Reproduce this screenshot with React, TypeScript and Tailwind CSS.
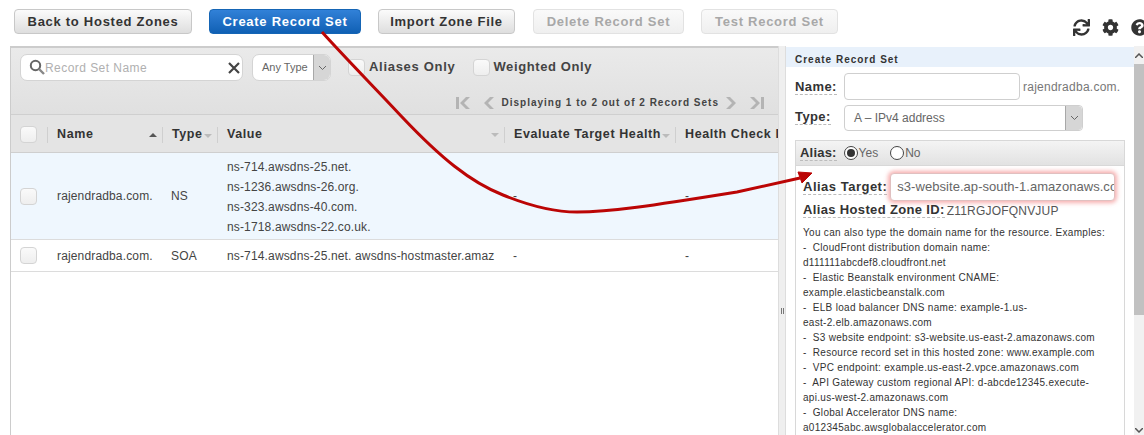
import React from 'react';
import { FaSync, FaCog, FaQuestionCircle } from 'react-icons/fa';

const Btn: React.FC<{ label: string; width: string; kind?: 'primary' | 'disabled' | 'normal' }> = ({ label, width, kind = 'normal' }) => {
    const skin =
        kind === 'primary'
            ? 'bg-gradient-to-b from-[#3181d8] to-[#0f60b4] border-[#1565b5] text-white'
            : kind === 'disabled'
                ? 'bg-gradient-to-b from-[#fafafa] to-[#efefef] border-[#e2e2e2] text-[#a8a8a8]'
                : 'bg-gradient-to-b from-[#fbfbfb] to-[#dedede] border-[#c8c8c8] text-[#333]';
    return (
        <div className={`${width} shrink-0 h-[25px] rounded-[4px] border flex items-center justify-center text-[13px] font-bold tracking-[0.72px] ${skin}`}>
            {label}
        </div>
    );
};

const Check: React.FC<{ className?: string }> = ({ className = '' }) => (
    <div className={`w-[17px] h-[17px] shrink-0 rounded-[4px] border border-[#d4d4d4] bg-gradient-to-b from-[#fafafa] to-[#eeeeee] ${className}`} />
);

const SelectArrow: React.FC = () => (
    <div className="w-[17px] self-stretch shrink-0 bg-[#d6d6d6] border-l border-[#a8a8a8] rounded-r-[4px] flex items-center justify-center">
        <svg width="9" height="6" viewBox="0 0 9 6"><path d="M1 1l3.5 3.5L8 1" fill="none" stroke="#666" strokeWidth="1" /></svg>
    </div>
);

const HeadCell: React.FC<{ label: string; width: string; sort?: 'up' | 'down'; sortLeft?: boolean }> = ({ label, width, sort, sortLeft }) => (
    <div className={`${width} shrink-0 h-[16px] border-l border-[#cfcfcf] pl-[9px] pr-[3px] flex items-center justify-between overflow-hidden`}>
        <span className="flex items-center whitespace-nowrap text-[12.5px] font-bold tracking-[0.6px] text-[#333]">
            {label}
            {sortLeft && <span className="ml-[1px] mt-[2px] border-x-[4px] border-x-transparent border-t-[4px] border-t-[#bbb]" />}
        </span>
        {sort === 'up' && <span className="border-x-[4px] border-x-transparent border-b-[4px] border-b-[#555] mr-[2px]" />}
        {sort === 'down' && <span className="border-x-[4px] border-x-transparent border-t-[4px] border-t-[#bbb] mr-[2px]" />}
    </div>
);

const Row: React.FC<{ type: string; value: string[]; height: string; highlight?: boolean }> = ({ type, value, height, highlight }) => (
    <div className={`${height} flex items-center border-b border-[#dcdcdc] text-[12px] text-[#444] tracking-[0.15px] ${highlight ? 'bg-[#eff7fe]' : 'bg-white'}`}>
        <div className="w-[36px] pl-[9px] shrink-0"><Check /></div>
        <div className="w-[115px] pl-[10px] shrink-0">rajendradba.com.</div>
        <div className="w-[55px] pl-[9px] shrink-0">{type}</div>
        <div className="w-[287px] pl-[10px] pt-[1px] shrink-0 leading-[20px] whitespace-nowrap overflow-hidden">
            {value.map(v => <div key={v}>{v}</div>)}
        </div>
        <div className="w-[171px] pl-[9px] shrink-0">-</div>
        <div className="pl-[10px]">-</div>
    </div>
);

// dashed underline under the form labels
const Label: React.FC<{ text: string; className?: string }> = ({ text, className = '' }) => (
    <span className={`border-b border-dashed border-[#bbbbbb] leading-[14px] text-[13px] font-bold text-[#333] ${className}`}>{text}</span>
);

const helpLines = [
    'You can also type the domain name for the resource. Examples:',
    '-  CloudFront distribution domain name:',
    'd111111abcdef8.cloudfront.net',
    '-  Elastic Beanstalk environment CNAME:',
    'example.elasticbeanstalk.com',
    '-  ELB load balancer DNS name: example-1.us-',
    'east-2.elb.amazonaws.com',
    '-  S3 website endpoint: s3-website.us-east-2.amazonaws.com',
    '-  Resource record set in this hosted zone: www.example.com',
    '-  VPC endpoint: example.us-east-2.vpce.amazonaws.com',
    '-  API Gateway custom regional API: d-abcde12345.execute-',
    'api.us-west-2.amazonaws.com',
    '-  Global Accelerator DNS name:',
    'a012345abc.awsglobalaccelerator.com',
];

export default function App() {
    return (
        <div className="relative w-[1144px] h-[435px] overflow-hidden bg-white font-['Liberation_Sans',Arial,sans-serif]">
            {/* top buttons */}
            <div className="h-[46px] flex items-start pt-[9px] pl-[14px]">
                <Btn label="Back to Hosted Zones" width="w-[178px]" />
                <div className="ml-[17px] shrink-0"><Btn label="Create Record Set" width="w-[152px]" kind="primary" /></div>
                <div className="ml-[17px] shrink-0"><Btn label="Import Zone File" width="w-[137px]" /></div>
                <div className="ml-[18px] shrink-0"><Btn label="Delete Record Set" width="w-[151px]" kind="disabled" /></div>
                <div className="ml-[17px] shrink-0"><Btn label="Test Record Set" width="w-[137px]" kind="disabled" /></div>
                <div className="ml-[235px] mt-[10px] flex gap-[12px] text-[#333] shrink-0">
                    <FaSync size={17} />
                    <FaCog size={17} />
                    <FaQuestionCircle size={17} />
                </div>
            </div>

            <div className="ml-[10px] h-[389px] flex">
                {/* record list */}
                <div className="w-[768px] shrink-0 border-l border-t-[2px] border-[#cccccc] overflow-hidden">
                    <div className="h-[67px] bg-gradient-to-b from-[#eaeaea] to-[#e0e0e0] border-b border-[#cfcfcf] pt-[6px] pl-[9px]">
                        <div className="flex items-center">
                            <div className="w-[223px] h-[27px] bg-white rounded-[7px] border border-[#d4d4d4] flex items-center pl-[8px] pr-[1px]">
                                <svg width="16" height="17" viewBox="0 0 16 17" className="shrink-0">
                                    <circle cx="6.5" cy="6.5" r="4.7" fill="none" stroke="#666" strokeWidth="2" />
                                    <path d="M10 10l5 5" stroke="#888" strokeWidth="2.4" />
                                </svg>
                                <span className="pt-[1px] text-[12px] text-[#b0b0b0] tracking-[0.45px] flex-1">Record Set Name</span>
                                <svg width="14" height="14" viewBox="0 0 14 14" className="shrink-0">
                                    <path d="M2 2l10 10M12 2L2 12" stroke="#444" strokeWidth="2.2" />
                                </svg>
                            </div>
                            <div className="ml-[9px] w-[79px] h-[27px] bg-white rounded-[7px] border border-[#d4d4d4] flex items-center overflow-hidden">
                                <span className="text-[11px] text-[#666] flex-1 pl-[9px]">Any Type</span>
                                <SelectArrow />
                            </div>
                            <Check className="ml-[17px] -mt-[1px]" />
                            <span className="ml-[4px] pb-[2px] text-[13px] font-bold tracking-[0.7px] text-[#444]">Aliases Only</span>
                            <Check className="ml-[18px] -mt-[1px]" />
                            <span className="ml-[3px] pb-[2px] text-[13px] font-bold tracking-[0.6px] text-[#444]">Weighted Only</span>
                        </div>
                        <div className="mt-[14px] pr-[13px] flex items-center justify-end text-[#b4b4b4]">
                            <svg width="16" height="14" viewBox="0 0 16 14"><path d="M1 1h3v12H1zM11 1l-6 6 6 6h4l-6-6 6-6z" fill="currentColor" /></svg>
                            <svg width="12" height="14" viewBox="0 0 12 14" className="ml-[12px]"><path d="M7 1L1 7l6 6h4L5 7l6-6z" fill="currentColor" /></svg>
                            <span className="ml-[7px] text-[10px] font-bold tracking-[1px] text-[#444]">Displaying 1 to 2 out of 2 Record Sets</span>
                            <svg width="12" height="14" viewBox="0 0 12 14" className="ml-[6px]"><path d="M5 1l6 6-6 6H1l6-6-6-6z" fill="currentColor" /></svg>
                            <svg width="16" height="14" viewBox="0 0 16 14" className="ml-[12px]"><path d="M15 1h-3v12h3zM5 1l6 6-6 6H1l6-6-6-6z" fill="currentColor" /></svg>
                        </div>
                    </div>
                    <div className="h-[38px] bg-[#e4e4e4] border-b border-[#cfcfcf] flex items-center pt-[2px]">
                        <div className="w-[36px] pl-[9px] shrink-0"><Check /></div>
                        <HeadCell label="Name" width="w-[115px]" sort="up" />
                        <HeadCell label="Type" width="w-[55px]" sortLeft />
                        <HeadCell label="Value" width="w-[287px]" sort="down" />
                        <HeadCell label="Evaluate Target Health" width="w-[171px]" sortLeft />
                        <HeadCell label="Health Check ID" width="w-[103px]" />
                    </div>
                    <Row
                        type="NS"
                        height="h-[87px]"
                        highlight
                        value={['ns-714.awsdns-25.net.', 'ns-1236.awsdns-26.org.', 'ns-323.awsdns-40.com.', 'ns-1718.awsdns-22.co.uk.']}
                    />
                    <Row type="SOA" height="h-[32px]" value={['ns-714.awsdns-25.net. awsdns-hostmaster.amaz']} />
                </div>

                {/* splitter */}
                <div className="w-[8px] shrink-0 bg-[#efefef] border-x border-[#dddddd] flex items-center justify-center pt-[140px]">
                    <div className="w-[3px] h-[6px] border-x border-[#777]" />
                </div>

                {/* create record set panel */}
                <div className="w-[348px] shrink-0 overflow-hidden">
                    <div className="mt-[1px] h-[20px] bg-[#e8f1fb] pl-[9px] pt-[4px] flex items-center text-[10px] font-bold tracking-[1px] text-[#333]">Create Record Set</div>
                    <div className="mt-[6px] pl-[9px] flex items-center">
                        <div className="w-[49px] pb-[2px]"><Label text="Name:" className="tracking-[0.4px]" /></div>
                        <div className="w-[176px] h-[27px] bg-white border border-[#cfcfcf] rounded-[4px]" />
                        <span className="ml-[3px] text-[12px] tracking-[0.25px] text-[#777]">rajendradba.com.</span>
                    </div>
                    <div className="mt-[4px] pl-[9px] flex items-center">
                        <div className="w-[49px] pb-[3px]"><Label text="Type:" className="tracking-[0.4px]" /></div>
                        <div className="w-[239px] h-[26px] bg-white border border-[#cfcfcf] rounded-[4px] flex items-center overflow-hidden">
                            <span className="flex-1 pl-[9px] text-[12px] text-[#666]">A – IPv4 address</span>
                            <SelectArrow />
                        </div>
                    </div>
                    <div className="mt-[9px] ml-[9px] w-[330px] h-[320px] border border-[#d8d8d8]">
                        <div className="h-[25px] bg-gradient-to-b from-[#f4f4f4] to-[#e2e2e2] border-b border-[#d8d8d8] flex items-center pl-[4px]">
                            <Label text="Alias:" className="tracking-[0.2px]" />
                            <span className="ml-[7px] w-[14px] h-[14px] rounded-full border border-[#444] bg-white flex items-center justify-center">
                                <span className="w-[8px] h-[8px] rounded-full bg-[#333]" />
                            </span>
                            <span className="ml-[1px] text-[12px] text-[#666]">Yes</span>
                            <span className="ml-[12px] w-[14px] h-[14px] rounded-full border border-[#444] bg-white" />
                            <span className="ml-[1px] text-[12px] text-[#666]">No</span>
                        </div>
                        <div className="pl-[7px]">
                            <div className="mt-[7px] flex items-center">
                                <Label text="Alias Target:" className="tracking-[0.5px]" />
                                <div className="ml-[3px] w-[225px] h-[28px] bg-white border border-[#e0c0c0] rounded-[4px] shadow-[0_0_4px_2px_rgba(240,110,110,0.55)] flex items-center px-[6px] overflow-hidden">
                                    <span className="text-[13px] tracking-[0.05px] text-[#666] whitespace-nowrap">s3-website.ap-south-1.amazonaws.com</span>
                                </div>
                            </div>
                            <div className="mt-[1px] flex items-center h-[17px]">
                                <Label text="Alias Hosted Zone ID:" className="tracking-[0.35px]" />
                                <span className="ml-[2px] text-[12px] tracking-[0.2px] text-[#555]">Z11RGJOFQNVJUP</span>
                            </div>
                            <div className="mt-[6px] text-[10px] leading-[15px] tracking-[0.3px] text-[#333] whitespace-pre">
                                {helpLines.map(l => <div key={l}>{l}</div>)}
                            </div>
                        </div>
                    </div>
                </div>

                {/* page scrollbar */}
                <div className="w-[10px] shrink-0 bg-[#f1f1f1] flex flex-col items-center">
                    <div className="h-[18px] flex items-center"><svg width="8" height="5" viewBox="0 0 8 5"><path d="M0 5l4-4 4 4" fill="none" stroke="#555" strokeWidth="1.5" /></svg></div>
                    <div className="w-full h-[251px] bg-[#c1c1c1]" />
                    <div className="mt-auto h-[9px] flex items-center"><svg width="8" height="5" viewBox="0 0 8 5"><path d="M0 0l4 4 4-4" fill="none" stroke="#555" strokeWidth="1.5" /></svg></div>
                </div>
            </div>

            {/* red annotation arrow */}
            <svg className="absolute inset-0 pointer-events-none" width="1144" height="435" viewBox="0 0 1144 435">
                <path d="M322 32C350 63 378 91 403 118C440 157 470 182 503 195C530 206 555 212 577 212C610 212 650 206 737 192L800 178" fill="none" stroke="#bb0505" strokeWidth="3" />
                <path d="M812 173L798 172L802 183z" fill="#bb0505" stroke="#bb0505" strokeWidth="1" />
            </svg>
        </div>
    );
}
